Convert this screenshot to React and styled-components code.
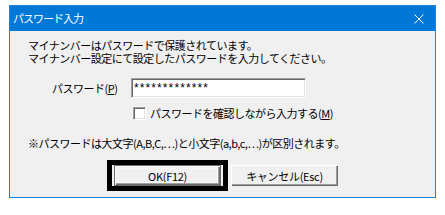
import React from 'react';
import styled, { createGlobalStyle } from 'styled-components';

const GlobalStyle = createGlobalStyle`
  html, body {
    margin: 0;
    padding: 0;
    background: #ffffff;
  }
  body {
    font-family: "Noto Sans CJK JP", "Liberation Sans", sans-serif;
  }
`;

const Page = styled.div`
  padding: 5px 0 0 9px;
`;

const Window = styled.div`
  width: 425px;
  border: 1px solid #1883d7;
  background: #f0f0f0;
`;

const TitleBar = styled.div`
  height: 25px;
  background: #0078d7;
  display: flex;
  align-items: center;
  justify-content: space-between;
  padding: 0 10px 0 3px;
  color: #ffffff;
`;

const Title = styled.span`
  font-size: 11px;
  letter-spacing: -1px;
  line-height: 12px;
  margin-top: -1px;
`;

const CloseIcon = styled.svg`
  display: block;
  width: 10px;
  height: 10px;
  margin-right: 1px;
`;

const Body = styled.div`
  display: flex;
  flex-direction: column;
  padding: 8px 0 6px 18px;
  font-size: 11px;
  letter-spacing: -0.5px;
  color: #000000;
`;

const Message = styled.p`
  margin: 0;
  line-height: 13px;
`;

const FieldRow = styled.div`
  display: flex;
  align-items: center;
  margin-top: 13px;
  padding-left: 24px;
`;

const FieldLabel = styled.label`
  width: 79px;
  line-height: 13px;
`;

const TextBox = styled.div`
  box-sizing: border-box;
  width: 175px;
  height: 20px;
  background: #ffffff;
  border-top: 1px solid #a0a0a0;
  border-left: 1px solid #a0a0a0;
  border-right: 1px solid #ffffff;
  border-bottom: 1px solid #ffffff;
  box-shadow: inset 1px 1px 0 #696969, inset -1px -1px 0 #e3e3e3;
  padding: 2px 0 0 2px;
  font-family: "Liberation Sans", sans-serif;
  font-size: 12px;
  letter-spacing: 1.1px;
  line-height: 14px;
`;

const CheckRow = styled.div`
  display: flex;
  align-items: center;
  gap: 4px;
  margin-top: 9px;
  padding-left: 105px;
  line-height: 13px;
`;

const CheckBox = styled.span`
  box-sizing: border-box;
  width: 13px;
  height: 13px;
  background: #ffffff;
  border-top: 1px solid #a0a0a0;
  border-left: 1px solid #a0a0a0;
  border-right: 1px solid #ffffff;
  border-bottom: 1px solid #ffffff;
  box-shadow: inset 1px 1px 0 #696969, inset -1px -1px 0 #e3e3e3;
`;

const Note = styled.p`
  margin: 17px 0 0;
  line-height: 13px;
`;

const ButtonRow = styled.div`
  display: flex;
  align-items: center;
  gap: 3px;
  margin-top: 10px;
  padding-left: 79px;
`;

const DefaultFrame = styled.div`
  border: 5px solid #000000;
  padding: 0 2px;
  display: flex;
`;

const Button = styled.button`
  box-sizing: border-box;
  width: 107px;
  height: 21px;
  margin: 0;
  padding: 0;
  background: #f0f0f0;
  border: ${p => (p.$default ? '1px solid #696969' : 'none')};
  box-shadow: inset 1px 1px 0 #ffffff, inset -1px -1px 0 #696969, inset -2px -2px 0 #a0a0a0;
  outline: ${p => (p.$default ? '1px dotted #ffffff' : 'none')};
  outline-offset: -4px;
  font-family: "Noto Sans CJK JP", "Liberation Sans", sans-serif;
  font-size: 11px;
  font-weight: 400;
  letter-spacing: -0.3px;
  line-height: 12px;
  color: #000000;
`;

export default function App() {
  return (
    <>
      <GlobalStyle />
      <Page>
        <Window>
          <TitleBar>
            <Title>パスワード入力</Title>
            <CloseIcon viewBox="0 0 10 10">
              <path d="M0.5 0.5 L9.5 9.5 M9.5 0.5 L0.5 9.5" stroke="#ffffff" strokeWidth="1" fill="none" />
            </CloseIcon>
          </TitleBar>
          <Body>
            <Message>
              マイナンバーはパスワードで保護されています。
              <br />
              マイナンバー設定にて設定したパスワードを入力してください。
            </Message>
            <FieldRow>
              <FieldLabel>パスワード(<u>P</u>)</FieldLabel>
              <TextBox>*************</TextBox>
            </FieldRow>
            <CheckRow>
              <CheckBox />
              <span>パスワードを確認しながら入力する(<u>M</u>)</span>
            </CheckRow>
            <Note>※パスワードは大文字(A,B,C,…)と小文字(a,b,c,…)が区別されます。</Note>
            <ButtonRow>
              <DefaultFrame>
                <Button $default>OK(F12)</Button>
              </DefaultFrame>
              <Button>キャンセル(Esc)</Button>
            </ButtonRow>
          </Body>
        </Window>
      </Page>
    </>
  );
}
